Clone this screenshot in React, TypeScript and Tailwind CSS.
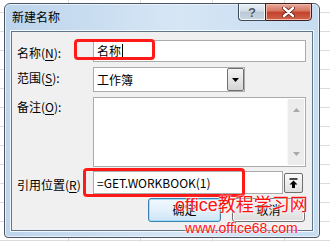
import React from 'react';

const cjk = "font-['Microsoft_YaHei','Noto_Sans_CJK_SC',sans-serif]";

const Key: React.FC<{ k: string }> = ({ k }) => (
  <span className="underline decoration-1 underline-offset-[2px]">{k}</span>
);

const Label: React.FC<{ children: React.ReactNode }> = ({ children }) => (
  <div className="text-[12px] leading-[16px] text-black whitespace-nowrap">{children}</div>
);

export default function App() {
  return (
    <div className="relative w-[330px] h-[242px] overflow-hidden bg-white bg-[linear-gradient(#dcdcdc_1px,transparent_1px),linear-gradient(90deg,#dcdcdc_1px,transparent_1px)] bg-[size:72px_19px] bg-[position:-4px_12px] pt-[3px] pl-[4px]">
      {/* dialog window */}
      <div className="w-[316px] h-[235px] rounded-t-[6px] rounded-b-[4px] border border-[#4b5563] bg-[linear-gradient(to_right,#bcd4ec,#d6e6f5_55%,#c6dcf1)] shadow-[inset_0_0_0_1px_#e9f2fb] flex flex-col">
        {/* title bar */}
        <div className="h-[27px] flex items-start justify-between">
          <div className={`${cjk} pl-[7px] pt-[5px] text-[12px] leading-[16px] text-black`}>新建名称</div>
          <div className="flex mr-[7px] -mt-[1px]">
            <div className="w-[27px] h-[18px] border border-[#3f4b58] border-r-0 rounded-bl-[4px] bg-[linear-gradient(#e9eff5,#d3dde8_45%,#b9c8d8_50%,#c9d6e3)] flex items-center justify-center shadow-[inset_0_0_0_1px_#f4f7fa]">
              <span className="font-['Liberation_Sans',sans-serif] text-[13px] font-bold text-[#4a5560] leading-none [text-shadow:0_0_1px_#fff]">?</span>
            </div>
            <div className="w-[47px] h-[18px] border border-[#3f1f1a] rounded-br-[4px] bg-[linear-gradient(#e9a99a,#d5735f_45%,#c4402a_50%,#d0634c)] flex items-center justify-center shadow-[inset_0_0_0_1px_#efb9ad]">
              <svg width="13" height="10" viewBox="0 0 13 10">
                <path d="M2 1 L11 9 M11 1 L2 9" stroke="#5a1a10" strokeWidth="4" strokeLinecap="round" />
                <path d="M2 1 L11 9 M11 1 L2 9" stroke="#ffffff" strokeWidth="2.4" strokeLinecap="round" />
              </svg>
            </div>
          </div>
        </div>

        {/* client area */}
        <div className={`${cjk} mx-[6px] mb-[6px] flex-1 border border-[#5e7590] bg-[#f0f0f0] pt-[8px] pl-[5px] pr-[6px] pb-[8px] flex flex-col shadow-[0_0_0_1px_#f5f9fd]`}>
          {/* name */}
          <div className="flex h-[22px]">
            <div className="w-[76px] pt-[5px]"><Label>名称(<Key k="N" />):</Label></div>
            <div className="relative flex-1 border border-[#ababab] bg-white flex items-center pl-[3px]">
              <span className="text-[12px] leading-[16px] text-black">名称</span>
              <span className="w-px h-[14px] bg-black ml-[1px]" />
              <div className="absolute -left-[20px] -top-[2px] w-[81px] h-[21px] border-[3px] border-[#ff1a1a] rounded-[4px]" />
            </div>
          </div>

          {/* scope */}
          <div className="flex h-[25px] mt-[5px]">
            <div className="w-[76px] pt-[3px]"><Label>范围(<Key k="S" />):</Label></div>
            <div className="w-[152px] border border-[#ababab] bg-white flex items-center justify-between pl-[3px]">
              <span className="text-[12px] leading-[16px] text-black">工作簿</span>
              <div className="w-[17px] h-full border border-[#6f6f6f] rounded-[2px] bg-[linear-gradient(#f4f4f4,#e6e6e6_50%,#d4d4d4)] flex items-center justify-center">
                <svg width="7" height="4" viewBox="0 0 7 4"><path d="M0 0 H7 L3.5 4 Z" fill="#000" /></svg>
              </div>
            </div>
          </div>

          {/* comment */}
          <div className="flex h-[70px] mt-[5px]">
            <div className="w-[76px] pt-[2px]"><Label>备注(<Key k="O" />):</Label></div>
            <div className="flex-1 border border-[#ababab] bg-white flex justify-end p-[1px]">
              <div className="w-[17px] h-full bg-[#ececec] border-l border-[#f8f8f8] flex flex-col items-center justify-between py-[9px]">
                <svg width="7" height="4" viewBox="0 0 7 4"><path d="M0 4 H7 L3.5 0 Z" fill="#a8a8a8" /></svg>
                <svg width="7" height="4" viewBox="0 0 7 4"><path d="M0 0 H7 L3.5 4 Z" fill="#a8a8a8" /></svg>
              </div>
            </div>
          </div>

          {/* refers to */}
          <div className="flex h-[23px] mt-[4px] items-center">
            <div className="w-[76px] self-start pt-[6px]"><Label>引用位置(<Key k="R" />)</Label></div>
            <div className="relative w-[190px] h-full border border-[#ababab] bg-white flex items-center pl-[3px]">
              <span className="text-[12px] leading-[16px] text-black">=GET.WORKBOOK(1)</span>
              <div className="absolute -left-[11px] -top-[4px] w-[162px] h-[29px] border-[3px] border-[#ff1a1a] rounded-[4px]" />
            </div>
            <div className="ml-[1px] w-[19px] h-[20px] border border-[#6f6f6f] rounded-[2px] bg-[linear-gradient(#fbfbfb,#eeeeee_50%,#e0e0e0)] flex items-center justify-center">
              <svg width="9" height="10" viewBox="0 0 9 10">
                <path d="M0.5 1 H8.5" stroke="#000" strokeWidth="1.4" />
                <path d="M4.5 2.5 L8.5 6.5 H6 V10 H3 V6.5 H0.5 Z" fill="#000" />
              </svg>
            </div>
          </div>

          {/* buttons */}
          <div className="flex h-[24px] mt-[4px] justify-end gap-[11px] pr-[1px]">
            <div className="w-[73px] h-full rounded-[3px] border border-[#3c7fb1] bg-[linear-gradient(#f2f8fd,#e3f0fb_50%,#cde5f8)] shadow-[inset_0_0_0_1px_#9ee0f8] flex items-center justify-center text-[12px] text-black">确定</div>
            <div className="w-[73px] h-full rounded-[3px] border border-[#707070] bg-[linear-gradient(#f2f2f2,#ebebeb_50%,#dddddd)] shadow-[inset_0_0_0_1px_#fcfcfc] flex items-center justify-center text-[12px] text-black">取消</div>
          </div>
        </div>
      </div>

      {/* watermark */}
      <div className="absolute left-[175px] top-[194px] flex flex-col items-center text-[#ff1010] [text-shadow:0_0_2px_#fff,0_0_2px_#fff]">
        <div className="text-[18px] leading-[22px] whitespace-nowrap font-['Liberation_Sans','Noto_Sans_CJK_SC',sans-serif]">office教程学习网</div>
        <div className="text-[14px] leading-[16px] whitespace-nowrap font-['Liberation_Sans',sans-serif] mt-[4px]">www.office68.com</div>
      </div>
    </div>
  );
}
